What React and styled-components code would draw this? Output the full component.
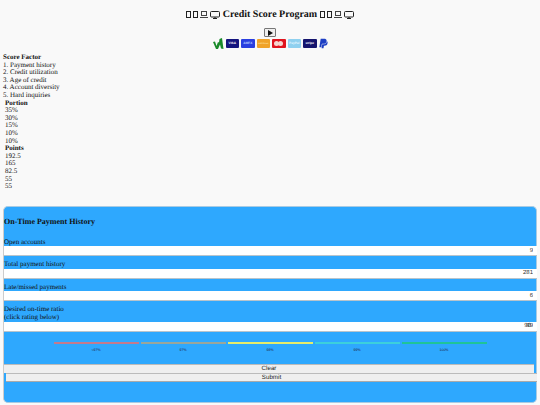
import React from 'react'
import styled, { createGlobalStyle } from 'styled-components'
import { FaPaypal } from 'react-icons/fa'

const factors = ['1. Payment history', '2. Credit utilization', '3. Age of credit', '4. Account diversity', '5. Hard inquiries']
const portions = ['35%', '30%', '15%', '10%', '10%']
const points = ['192.5', '165', '82.5', '55', '55']
const fields = [
  { label: 'Open accounts', value: '9' },
  { label: 'Total payment history', value: '281' },
  { label: 'Late/missed payments', value: '6' },
]
const ratings = [
  { color: '#c47a8c', label: '<97%' },
  { color: '#9aa69a', label: '97%' },
  { color: '#e6ec6a', label: '98%' },
  { color: '#3cd0dc', label: '99%' },
  { color: '#1fc498', label: '100%' },
]
const cards = [
  { bg: '#14147e', color: '#fff', label: 'VISA' },
  { bg: '#2a3fe0', color: '#b4c8ff', label: 'AMEX' },
  { bg: '#f0a32a', color: '#ffe0a0', label: 'DISCOVER', small: true },
  { bg: '#e0141e', mc: true },
  { bg: '#8fd0ef', color: '#e4f6ff', label: 'PayPal' },
  { bg: '#15156e', color: '#fff', label: 'stripe' },
]

function Devices() {
  return (
    <DeviceRow>
      <svg width="5" height="7" viewBox="0 0 5 7"><rect x=".5" y=".5" width="4" height="6" fill="none" stroke="#222" /></svg>
      <svg width="5" height="7" viewBox="0 0 5 7"><rect x=".5" y=".5" width="4" height="6" fill="none" stroke="#222" /></svg>
      <svg width="8" height="7" viewBox="0 0 8 7"><rect x="1.500" y=".5" width="5" height="4" fill="none" stroke="#444" /><path d="M0 6.500h8" stroke="#444" /></svg>
      <svg width="10" height="8" viewBox="0 0 10 8"><rect x=".5" y=".5" width="9" height="5.500" rx="1" fill="none" stroke="#222" /><path d="M3 7.500h4M5 6v1.500" stroke="#222" /></svg>
    </DeviceRow>
  )
}

export default function App() {
  return (
    <>
      <GlobalStyle />
      <Header>
        <Title>
          <Devices /> Credit Score Program <Devices />
        </Title>
        <PlayButton type="button" aria-label="Play">
          <svg width="6" height="6" viewBox="0 0 6 6"><path d="M1 0l5 3-5 3z" fill="#111" /></svg>
        </PlayButton>
        <Payments>
          <svg width="11" height="11" viewBox="0 0 11 11"><path d="M0 4l2-.5L3.500 8 5 4l1 .5L6.500 1 9 0l1.500 11L8 10.500 7 6.500 5 11H3z" fill="#1a8a2a" /></svg>
          {cards.map((card, i) => (
            <Card key={i} $bg={card.bg} $color={card.color} $small={card.small}>
              {card.mc ? <><Dot /><Dot /></> : card.label}
            </Card>
          ))}
          <PaypalIcon />
        </Payments>
      </Header>
      <Breakdown>
        <Column>
          <strong>Score Factor</strong>
          {factors.map(f => <div key={f}>{f}</div>)}
        </Column>
        <Column $indent>
          <strong>Portion</strong>
          {portions.map((p, i) => <div key={i}>{p}</div>)}
        </Column>
        <Column $indent>
          <strong>Points</strong>
          {points.map((p, i) => <div key={i}>{p}</div>)}
        </Column>
      </Breakdown>
      <Panel>
        <PanelTitle>On-Time Payment History</PanelTitle>
        {fields.map(field => (
          <Field key={field.label}>
            <label>{field.label}</label>
            <input type="text" readOnly value={field.value} />
          </Field>
        ))}
        <Field>
          <label>Desired on-time ratio<br />(click rating below)</label>
          <input type="text" readOnly value="99" />
          <Overlap>90</Overlap>
        </Field>
        <Ratings>
          {ratings.map(r => (
            <Rating key={r.label} $color={r.color}><span>{r.label}</span></Rating>
          ))}
        </Ratings>
        <ClearButton type="button">Clear</ClearButton>
        <SubmitButton type="button">Submit</SubmitButton>
      </Panel>
    </>
  )
}

const GlobalStyle = createGlobalStyle`
  html, body { margin: 0; padding: 0; background: #f9f9f9; }
  body {
    width: 540px;
    height: 405px;
    overflow: hidden;
    font-family: "Liberation Serif", "Times New Roman", serif;
    font-size: 7px;
    line-height: 7.6px;
    color: #111;
    text-rendering: geometricPrecision;
  }
  input, button { text-rendering: geometricPrecision; }
`

const Header = styled.header`
  padding-top: 9px;
  text-align: center;
`

const Title = styled.h1`
  margin: 0 0 7px;
  font-size: 10px;
  line-height: 12px;
  font-weight: 700;
`

const DeviceRow = styled.span`
  display: inline-flex;
  align-items: center;
  gap: 2px;
  vertical-align: -1px;
`

const PlayButton = styled.button`
  display: block;
  width: 12px;
  height: 9px;
  margin: 0 auto 1px;
  padding: 0;
  border: 1px solid #777;
  border-radius: 1px;
  background: #efefef;
  line-height: 0;
`

const Payments = styled.div`
  display: flex;
  justify-content: center;
  align-items: center;
  gap: 2px;
  height: 11px;
`

const Card = styled.span`
  display: flex;
  justify-content: center;
  align-items: center;
  width: 13.5px;
  height: 9px;
  border-radius: 1px;
  background: ${p => p.$bg};
  color: ${p => p.$color || '#fff'};
  font-family: "Liberation Sans", Arial, sans-serif;
  font-size: ${p => (p.$small ? '2px' : '3.2px')};
  line-height: 1;
  font-weight: 700;
  overflow: hidden;
`

const Dot = styled.i`
  width: 5px;
  height: 5px;
  border-radius: 50%;
  background: #f6d5cf;
  & + & { margin-left: -1px; }
`

const PaypalIcon = styled(FaPaypal)`
  width: 9px;
  height: 11px;
  color: #1d3fc4;
`

const Breakdown = styled.section`
  margin-top: 5px;
  padding-left: 3px;
`

const Column = styled.div`
  padding-left: ${p => (p.$indent ? '2px' : '0')};
  strong { display: block; }
`

const Panel = styled.section`
  width: 534px;
  height: 197px;
  box-sizing: border-box;
  margin: 15px 0 0 3px;
  border: 1px solid #a9cbe3;
  border-left-color: #ccc;
  border-radius: 5px;
  background: #2ea8fe;
`

const PanelTitle = styled.h2`
  margin: 0;
  padding: 10px 0 12px;
  font-size: 8px;
  line-height: 10px;
  font-weight: 700;
`

const Field = styled.div`
  position: relative;
  margin-bottom: 5px;
  label { display: block; }
  input {
    display: block;
    width: 533px;
    height: 10px;
    box-sizing: border-box;
    padding: 0 4px 0 0;
    border: none;
    border-bottom: 1px solid #b8c4cc;
    background: #fff;
    color: #333;
    text-align: right;
    font-family: "Liberation Sans", Arial, sans-serif;
    font-size: 6px;
  }
`

const Overlap = styled.span`
  position: absolute;
  right: 5px;
  bottom: 1px;
  font-family: "Liberation Sans", Arial, sans-serif;
  font-size: 6px;
  color: #333;
`

const Ratings = styled.div`
  display: grid;
  grid-template-columns: repeat(5, 85px);
  gap: 2px;
  justify-content: center;
  margin: 10px 0 10px 0;
`

const Rating = styled.div`
  height: 10px;
  border-top: 2px solid ${p => p.$color};
  text-align: center;
  span {
    display: block;
    margin-top: 4px;
    font-family: "Liberation Sans", Arial, sans-serif;
    font-size: 3.5px;
    line-height: 4px;
    color: #224;
  }
`

const ClearButton = styled.button`
  display: block;
  width: 530px;
  height: 9px;
  padding: 0;
  border: none;
  border-top: 1px solid #bbb;
  background: #efefef;
  color: #222;
  font-family: "Liberation Sans", Arial, sans-serif;
  font-size: 6.2px;
  line-height: 8px;
`

const SubmitButton = styled(ClearButton)`
  margin-left: 2px;
  width: 531px;
  border-bottom: 1px solid #aaa;
`
